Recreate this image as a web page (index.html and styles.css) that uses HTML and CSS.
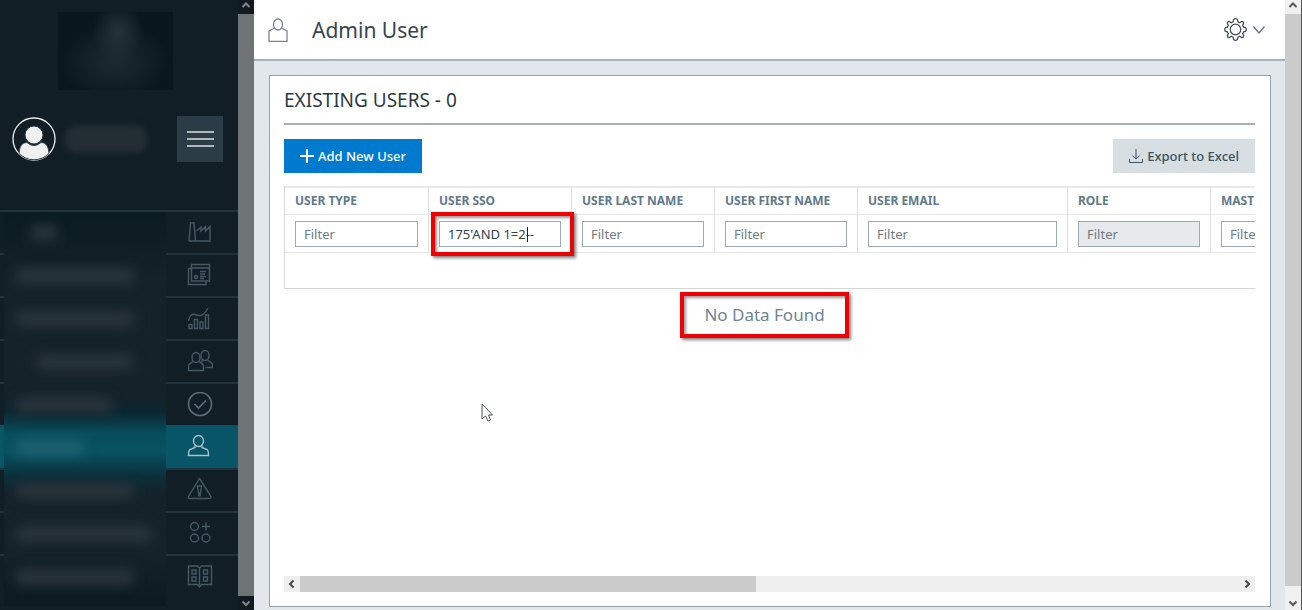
FILE: index.html
```html
<!DOCTYPE html>
<html lang="en">

<head>
    <meta charset="utf-8">
    <title>Admin User</title>
    <link rel="stylesheet" href="styles.css">
</head>

<body>
    <div class="app">
        <aside class="sidebar">
            <div class="sidebar-logo"></div>
            <div class="sidebar-profile">
                <svg class="avatar" viewBox="0 0 44 44">
                    <circle cx="22" cy="22" r="21" fill="none" stroke="#f0f0f0" stroke-width="1.3" />
                    <circle cx="22" cy="18" r="9" fill="#f0f0f0" />
                    <path d="M7 36.500C7.500 29 10 25.500 15 25.500Q22 31.500 29 25.500C34 25.500 36.500 29 37 36.500A21 21 0 0 1 7 36.500Z" fill="#f0f0f0" />
                </svg>
                <div class="sidebar-name"></div>
                <button class="menu-toggle" aria-label="Menu"><span></span><span></span><span></span></button>
            </div>

            <nav class="nav">
                <div class="nav-mask"></div>
                <a class="nav-item" href="#" aria-label="Plants">
                    <span class="nav-label nav-label-tiny"></span>
                    <svg class="nav-icon" viewBox="0 0 26 26"><path d="M2 21L3.500 3H7L8.500 21M2 21H23V6.500L18.500 11V6.500L14 11V7L9.500 11" /></svg>
                </a>
                <a class="nav-item" href="#" aria-label="News">
                    <span class="nav-label"></span>
                    <svg class="nav-icon" viewBox="0 0 26 26"><path d="M4.500 1.500H22.500V18H4.500ZM4.500 5H22.500M4.500 5.500H1.500V21.500H19V18M13 8.500H19M13 11H18M13 13.500H19M13 15.500H17" /><circle cx="9" cy="14" r="1.500" /></svg>
                </a>
                <a class="nav-item" href="#" aria-label="Reports">
                    <span class="nav-label"></span>
                    <svg class="nav-icon" viewBox="0 0 26 26"><path d="M2 18.500H5V22.500H2ZM7.500 13.500H10.500V22.500H7.500ZM13 16H16V22.500H13ZM18.500 9H21.500V22.500H18.500ZM1.500 15C2 10 5 7.500 8 8.500C14 11 17 9 21 2" /></svg>
                </a>
                <a class="nav-item" href="#" aria-label="Groups">
                    <span class="nav-label nav-label-indent"></span>
                    <svg class="nav-icon" viewBox="0 0 26 26"><ellipse cx="9" cy="8.500" rx="4" ry="5" /><ellipse cx="18" cy="6.500" rx="4" ry="5" /><path d="M6 12.500L2 15.500Q1.500 17 1.500 21.500H16.500Q16.500 17 16 15.500L12 12.500M20.500 11L24.500 14Q26 15.500 25.500 18.500H18.500M15 10.500V13.500" /></svg>
                </a>
                <a class="nav-item" href="#" aria-label="Approvals">
                    <span class="nav-label nav-label-short"></span>
                    <svg class="nav-icon nav-icon-strong" viewBox="0 0 26 26"><circle cx="13" cy="12" r="11.500" /><path d="M7.500 12L11.500 16L19 8.500" /></svg>
                </a>
                <a class="nav-item nav-item-active" href="#" aria-label="Admin User">
                    <span class="nav-label nav-label-active"></span>
                    <svg class="nav-icon" viewBox="0 0 26 26"><ellipse cx="11.500" cy="6" rx="5" ry="5.500" /><path d="M8 10.500V12.500L3 14.500Q1.500 15.500 1.500 20.500H21.500Q21.500 15.500 20 14.500L15 12.500V10.500" /></svg>
                </a>
                <a class="nav-item" href="#" aria-label="Alerts">
                    <span class="nav-label"></span>
                    <svg class="nav-icon" viewBox="0 0 26 26"><path d="M12.500 0.500L24 18.500Q24 20.500 22.500 20.500H2.500Q1 20.500 1.500 18.500ZM10.500 8H14.500L13.500 15H11.500Z" /><circle cx="12.500" cy="17" r="1" /></svg>
                </a>
                <a class="nav-item" href="#" aria-label="Add module">
                    <span class="nav-label nav-label-long"></span>
                    <svg class="nav-icon" viewBox="0 0 26 26"><circle cx="7.500" cy="5.500" r="4" /><circle cx="7.500" cy="17" r="4" /><circle cx="19" cy="17" r="4" /><path d="M19 1.500V9.500M15 5.500H23" /></svg>
                </a>
                <a class="nav-item" href="#" aria-label="Guide">
                    <span class="nav-label"></span>
                    <svg class="nav-icon" viewBox="0 0 26 26"><path d="M1.500 2H10.500L12.500 4L14.500 2H24.500V20.500H14.500L12.500 23L10.500 20.500H1.500ZM12.500 4V21M5 6H9V10H5ZM5 13H9V17H5ZM16.500 6H20.500V10H16.500ZM16.500 13H20.500V17H16.500Z" /></svg>
                </a>
            </nav>
        </aside>

        <div class="scroll scroll-dark">
            <svg viewBox="0 0 16 14"><path d="M4.500 7L8 3.500L11.500 7" /></svg>
            <div class="scroll-thumb"></div>
            <svg viewBox="0 0 16 14"><path d="M4.500 5.500L8 9L11.500 5.500" /></svg>
        </div>

        <div class="main">
            <header class="header">
                <svg class="header-icon" viewBox="0 0 20 24"><ellipse cx="10" cy="6.500" rx="4.500" ry="5.500" /><path d="M6.500 10L1 13V23.500H19V13L13.500 10" /></svg>
                <h1>Admin User</h1>
                <button class="settings" aria-label="Settings">
                    <svg class="settings-gear" viewBox="0 0 24 24"><circle cx="12" cy="12" r="5.500" /><path d="M10 1.500Q12 0 14 1.500L14.500 4L16.500 5L18.500 3.500Q20.500 3.500 20.500 5.500L19.500 7.500L20.500 9.500L22.500 10Q24 12 22.500 14L20.500 14.500L19.500 16.500L20.500 18.500Q20.500 20.500 18.500 20.500L16.500 19L14.500 20L14 22.500Q12 24 10 22.500L9.500 20L7.500 19L5.500 20.500Q3.500 20.500 3.500 18.500L4.500 16.500L3.500 14.500L1.500 14Q0 12 1.500 10L3.500 9.500L4.500 7.500L3.500 5.500Q3.500 3.500 5.500 3.500L7.500 5L9.500 4Z" /></svg>
                    <svg class="settings-arrow" viewBox="0 0 12 8"><path d="M0.500 0.500L6 7L11.500 0.500" /></svg>
                </button>
            </header>

            <main class="content">
                <section class="card">
                    <h2>EXISTING USERS - 0</h2>
                    <div class="toolbar">
                        <button class="btn btn-primary">
                            <svg viewBox="0 0 14 14"><path d="M7 0V14M0 7H14" stroke-width="2" /></svg>
                            Add New User
                        </button>
                        <button class="btn btn-export">
                            <svg viewBox="0 0 14 14"><path d="M7 0V9.500M3.500 6.500L7 10L10.500 6.500M0.500 10V13.500H13.500V10" /></svg>
                            Export to Excel
                        </button>
                    </div>

                    <div class="grid">
                        <table>
                            <colgroup>
                                <col class="col-first"><col class="col"><col class="col"><col class="col"><col class="col-wide"><col class="col"><col class="col">
                            </colgroup>
                            <thead>
                                <tr>
                                    <th id="type">USER TYPE</th>
                                    <th id="sso">USER SSO</th>
                                    <th id="last">USER LAST NAME</th>
                                    <th id="first">USER FIRST NAME</th>
                                    <th id="email">USER EMAIL</th>
                                    <th id="role">ROLE</th>
                                    <th id="mast">MAST</th>
                                </tr>
                                <tr class="filters">
                                    <td><input type="text" placeholder="Filter" aria-labelledby="type"></td>
                                    <td class="marked"><input type="text" value="175'AND 1=2--" aria-labelledby="sso"><span class="caret"></span><span class="mark"></span></td>
                                    <td><input type="text" placeholder="Filter" aria-labelledby="last"></td>
                                    <td><input type="text" placeholder="Filter" aria-labelledby="first"></td>
                                    <td><input type="text" placeholder="Filter" aria-labelledby="email"></td>
                                    <td><input type="text" placeholder="Filter" aria-labelledby="role" disabled></td>
                                    <td><input type="text" placeholder="Filter" aria-labelledby="mast"></td>
                                </tr>
                            </thead>
                            <tbody>
                                <tr class="empty-row"><td colspan="7"></td></tr>
                            </tbody>
                        </table>
                    </div>

                    <p class="no-data">No Data Found</p>

                    <div class="scroll-x">
                        <svg viewBox="0 0 16 16"><path d="M9.500 4.500L6 8L9.500 11.500" /></svg>
                        <div class="scroll-x-track"><div class="scroll-x-thumb"></div></div>
                        <svg viewBox="0 0 16 16"><path d="M6.500 4.500L10 8L6.500 11.500" /></svg>
                    </div>
                </section>
            </main>
        </div>

        <div class="scroll scroll-page">
            <svg viewBox="0 0 16 14"><path d="M4.500 7L8 3.500L11.500 7" /></svg>
            <div class="scroll-thumb"></div>
            <svg viewBox="0 0 16 14"><path d="M4.500 5.500L8 9L11.500 5.500" /></svg>
        </div>
    </div>

    <svg class="pointer" viewBox="0 0 12 19"><path d="M1 1V16L4.500 13L7 18L9.500 17L7.500 12H11.500Z" /></svg>
</body>

</html>
```

FILE: styles.css
```css
* {
    box-sizing: border-box;
}

body {
    margin: 0;
    font-family: "Noto Sans", "Open Sans", sans-serif;
    color: #2b3a44;
}

button,
input {
    font-family: inherit;
}

svg {
    display: block;
    fill: none;
    stroke: currentColor;
}

.app {
    display: flex;
    height: 100vh;
    overflow: hidden;
}

/* sidebar */
.sidebar {
    width: 238px;
    flex-shrink: 0;
    background: #111e26;
    overflow: hidden;
}

.sidebar-logo {
    width: 115px;
    height: 78px;
    margin: 12px auto 0 58px;
    background: radial-gradient(ellipse 26px 30px at 60px 20px, #26323a, transparent), radial-gradient(ellipse 56px 40px at 57px 50px, #1d2a31, transparent), #08161e;
}

.sidebar-profile {
    display: flex;
    align-items: center;
    height: 46px;
    margin: 26px 15px 48px 12px;
}

.avatar {
    width: 44px;
    height: 44px;
}

.sidebar-name {
    width: 82px;
    height: 28px;
    margin-left: 9px;
    border-radius: 12px;
    background: #232d34;
    filter: blur(3px);
}

.menu-toggle {
    display: flex;
    flex-direction: column;
    align-items: center;
    justify-content: center;
    gap: 5px;
    width: 46px;
    height: 46px;
    margin-left: auto;
    padding: 0;
    border: none;
    background: #2b3c47;
}

.menu-toggle span {
    width: 27px;
    height: 2px;
    background: #b0b7bd;
}

.nav {
    position: relative;
}

.nav-item {
    display: flex;
    align-items: center;
    justify-content: space-between;
    height: 43px;
    padding-right: 25px;
    border-top: 2px solid #22333d;
    color: #465864;
}

.nav-item-active {
    background: #075566;
    border-color: #075566;
    color: #a9c3cf;
}

.nav-item-active + .nav-item {
    border-color: #1b3540;
}

/* hides the customer's menu names */
.nav-mask {
    position: absolute;
    left: 4px;
    top: 2px;
    width: 162px;
    height: 394px;
    background: linear-gradient(#0b1b22, #14222a 70px, #14222a 185px, #0b2630 200px, #074e5d 222px, #075160 240px, #0a303b 264px, #14222a 280px, #14222a 340px, #0b1a21);
}

.nav-label {
    position: relative;
    width: 120px;
    height: 16px;
    margin-left: 15px;
    border-radius: 8px;
    background: #29343b;
    filter: blur(6px);
}

.nav-label-tiny {
    width: 28px;
    margin-left: 30px;
}

.nav-label-indent {
    width: 98px;
    margin-left: 36px;
}

.nav-label-short {
    width: 98px;
}

.nav-label-active {
    width: 70px;
    background: #1c6070;
}

.nav-label-long {
    width: 138px;
}

.nav-icon {
    width: 26px;
    height: 26px;
    stroke-width: 1.4;
}

.nav-icon-strong {
    color: #5b6d78;
    stroke-width: 1.6;
}

/* scrollbars */
.scroll {
    display: flex;
    flex-direction: column;
    width: 16px;
    flex-shrink: 0;
}

.scroll svg {
    height: 14px;
    stroke-width: 2;
}

.scroll-thumb {
    flex: 1;
}

.scroll-dark {
    background: #131920;
    color: #7f868b;
}

.scroll-dark .scroll-thumb {
    background: #6e7376;
}

.scroll-page {
    width: 17px;
    border-right: 1px solid #555;
    background: #f0f0f0;
    color: #555a5e;
}

.scroll-page .scroll-thumb {
    margin-bottom: 10px;
    background: #cbcbcb;
}

.scroll-x {
    display: flex;
    margin-top: auto;
    background: #efefef;
    color: #44494d;
}

.scroll-x svg {
    width: 16px;
    height: 16px;
    stroke-width: 2;
}

.scroll-x-track {
    flex: 1;
}

.scroll-x-thumb {
    width: 48.600%;
    height: 100%;
    background: #cbcbcb;
}

/* page */
.main {
    display: flex;
    flex-direction: column;
    flex: 1;
    min-width: 0;
    background: #e1e7eb;
}

.header {
    display: flex;
    align-items: center;
    height: 61px;
    padding: 0 20px 0 14px;
    border-bottom: 2px solid #a3b2bd;
    background: #fff;
}

.header-icon {
    width: 20px;
    height: 24px;
    color: #77858f;
    stroke-width: 1.3;
}

.header h1 {
    margin: 0 auto 0 24px;
    font-size: 21px;
    font-weight: 400;
    color: #36454f;
}

.settings {
    display: flex;
    align-items: center;
    gap: 6px;
    padding: 0;
    border: none;
    background: none;
    color: #3f4d57;
    stroke-width: 1.3;
}

.settings-gear {
    width: 23px;
    height: 23px;
}

.settings-arrow {
    width: 12px;
    height: 8px;
    color: #5c7485;
}

.content {
    display: flex;
    flex: 1;
    min-height: 0;
    padding: 14px 14px 3px 15px;
}

.card {
    display: flex;
    flex-direction: column;
    flex: 1;
    min-width: 0;
    padding: 0 15px 14px 14px;
    border: 1px solid #8fa2af;
    background: #fff;
}

.card h2 {
    margin: 0;
    height: 49px;
    border-bottom: 2px solid #a3b2bd;
    font-size: 19px;
    font-weight: 400;
    line-height: 48px;
}

.toolbar {
    display: flex;
    justify-content: space-between;
    margin: 14px 0 13px;
}

.btn {
    display: flex;
    align-items: center;
    gap: 4px;
    height: 34px;
    padding: 0 16px;
    border: none;
    font-size: 13px;
    font-weight: 500;
}

.btn svg {
    width: 14px;
    height: 14px;
}

.btn-primary {
    background: #007acf;
    color: #fff;
}

.btn-export {
    background: #d7dfe3;
    color: #3c5161;
}

.grid {
    overflow: hidden;
    border-left: 1px solid #d5d5d5;
    flex-shrink: 0;
}

table {
    width: 1069px;
    table-layout: fixed;
    border-collapse: separate;
    border-spacing: 0;
    border-top: 2px solid #e8e8e8;
}

.col {
    width: 143px;
}

.col-first {
    width: 144px;
}

.col-wide {
    width: 210px;
}

th,
td {
    padding: 0 10px;
    border-right: 1px solid #dcdcdc;
    border-bottom: 1px solid #e6e6e6;
    text-align: left;
    white-space: nowrap;
}

th {
    height: 27px;
    padding-bottom: 2px;
    font-size: 12px;
    font-weight: 700;
    color: #5f7a8c;
}

.filters td {
    height: 38px;
}

.filters input {
    display: block;
    width: 100%;
    height: 26px;
    padding: 0 8px;
    border: 1px solid #9aabb7;
    border-radius: 0;
    background: #fff;
    font-size: 13px;
    color: #33414b;
}

.filters input::placeholder {
    color: #6d7b85;
}

.filters input:disabled {
    background: #e6eaed;
}

.empty-row td {
    height: 36px;
    border-bottom: 1px solid #d5d5d5;
}

.marked {
    position: relative;
}

.caret {
    position: absolute;
    left: 98px;
    top: 12px;
    width: 1px;
    height: 15px;
    background: #222;
}

/* red callouts */
.mark {
    position: absolute;
    inset: -3px -3px -4px 2px;
    z-index: 1;
}

.mark,
.no-data {
    border: 4px solid #f00000;
    box-shadow: 2px 2px 3px rgba(0, 0, 0, 0.5), inset 2px 2px 3px rgba(0, 0, 0, 0.4);
}

.no-data {
    align-self: center;
    margin: 3px 10px 0 0;
    padding: 0 20px;
    font-size: 17px;
    line-height: 38px;
    color: #6d8494;
}

.pointer {
    position: absolute;
    left: 481px;
    top: 403px;
    width: 12px;
    height: 19px;
    fill: #fff;
    color: #4a525c;
}
```
